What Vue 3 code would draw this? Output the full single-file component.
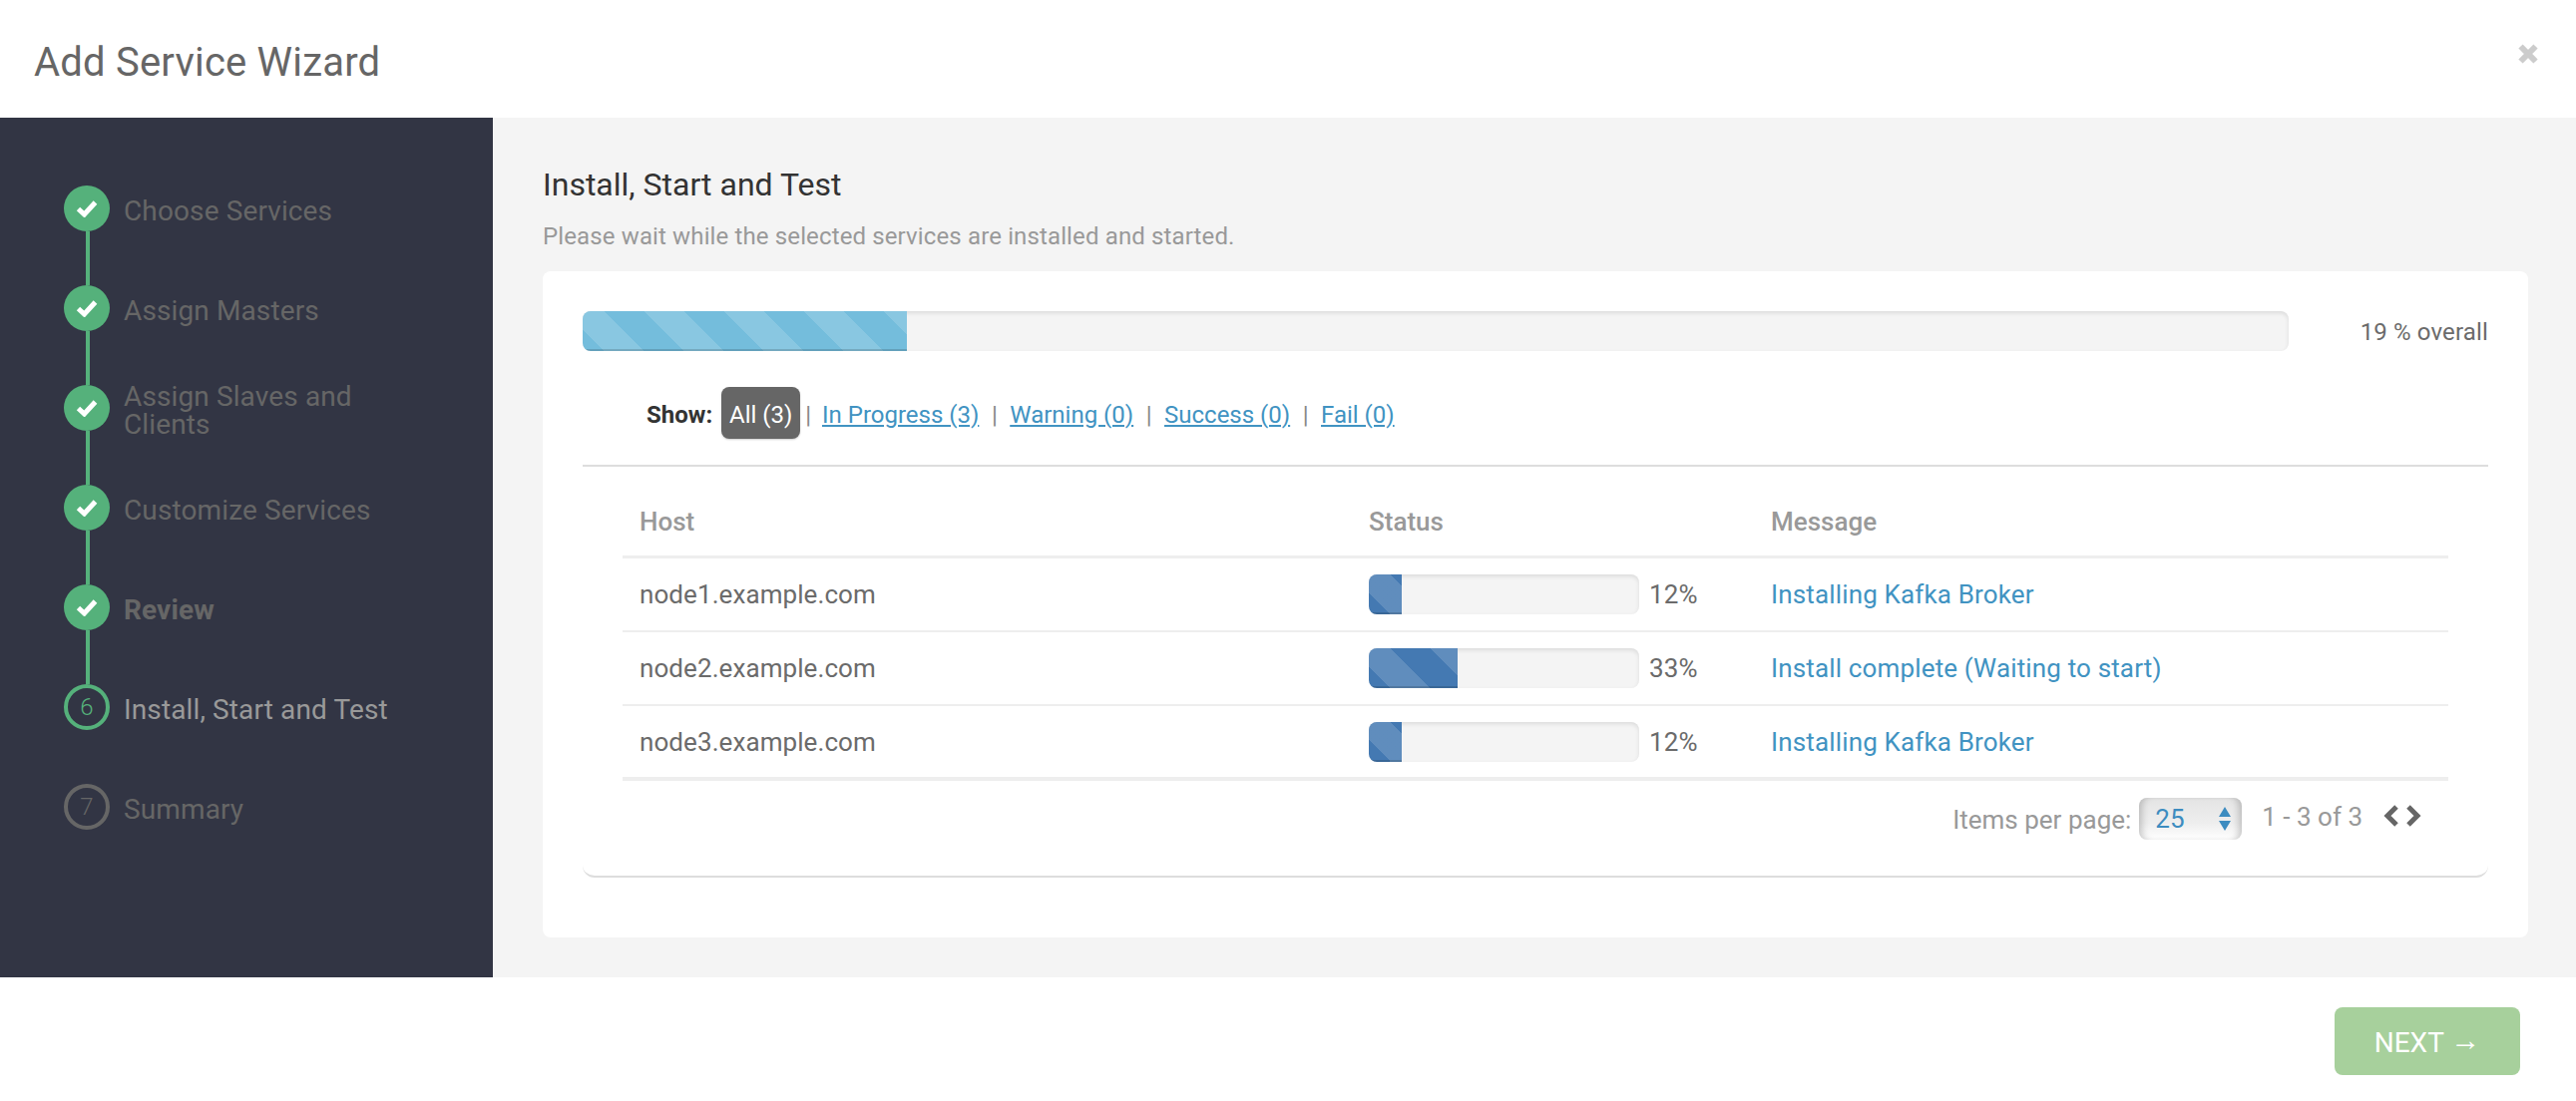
<template>
  <div class="wizard">
    <header class="wizard__header">
      <h1>Add Service Wizard</h1>
      <svg class="close" width="20" height="20" viewBox="0 0 20 20"><path d="M2.500 2.500l15 15M17.500 2.500l-15 15" stroke="#ccc" stroke-width="6" /></svg>
    </header>

    <div class="wizard__body">
      <aside class="steps">
        <div v-for="(step, i) in steps" :key="step.name" class="step" :class="step.state">
          <div class="dot">
            <svg v-if="step.state === 'done' || step.state === 'review'" width="22" height="18" viewBox="0 0 22 18">
              <path d="M2.500 9.500l6 5.500L19.500 3" fill="none" stroke="#fff" stroke-width="5" />
            </svg>
            <template v-else>{{ i + 1 }}</template>
          </div>
          <div class="step-name">{{ step.name }}</div>
        </div>
      </aside>

      <main class="content">
        <h2>Install, Start and Test</h2>
        <p class="lead">Please wait while the selected services are installed and started.</p>

        <section class="card">
          <div class="inner">
            <div class="overall">
              <div class="bar bar--overall">
                <div class="fill fill--info" style="width: 19%"></div>
              </div>
              <div class="overall-text">19 % overall</div>
            </div>

            <div class="filters">
              <b>Show:</b>
              <span class="pill">All (3)</span>
              <span class="sep first">|</span>
              <template v-for="(f, i) in filters" :key="f">
                <a href="#">{{ f }}</a>
                <span v-if="i < filters.length - 1" class="sep">|</span>
              </template>
            </div>

            <div class="table-wrap">
              <table>
                <colgroup>
                  <col style="width: 732px" />
                  <col style="width: 403px" />
                  <col />
                </colgroup>
                <thead>
                  <tr>
                    <th>Host</th>
                    <th>Status</th>
                    <th>Message</th>
                  </tr>
                </thead>
                <tbody>
                  <tr v-for="row in rows" :key="row.host">
                    <td>{{ row.host }}</td>
                    <td>
                      <div class="status">
                        <div class="bar bar--host">
                          <div class="fill fill--blue" :style="{ width: row.pct + '%' }"></div>
                        </div>
                        <span>{{ row.pct }}%</span>
                      </div>
                    </td>
                    <td><a class="msg" href="#">{{ row.message }}</a></td>
                  </tr>
                </tbody>
              </table>

              <div class="pager">
                <span class="per-page">Items per page:</span>
                <div class="select">
                  <span>25</span>
                  <svg width="12" height="24" viewBox="0 0 12 24">
                    <path d="M6 0l6 10H0zM6 24L0 14h12z" fill="#3d8cc0" />
                  </svg>
                </div>
                <span class="range">1 - 3 of 3</span>
                <svg class="chevrons" width="40" height="24" viewBox="0 0 40 24">
                  <path d="M14 3L5 12l9 9M26 3l9 9-9 9" fill="none" stroke="#666" stroke-width="5" />
                </svg>
              </div>
            </div>
          </div>
        </section>
      </main>
    </div>

    <footer class="wizard__footer">
      <button class="next">NEXT <span class="arrow">&rarr;</span></button>
    </footer>
  </div>
</template>

<script setup>
const steps = [
  { name: 'Choose Services', state: 'done' },
  { name: 'Assign Masters', state: 'done' },
  { name: 'Assign Slaves and Clients', state: 'done' },
  { name: 'Customize Services', state: 'done' },
  { name: 'Review', state: 'review' },
  { name: 'Install, Start and Test', state: 'active' },
  { name: 'Summary', state: 'todo' },
]

const filters = ['In Progress (3)', 'Warning (0)', 'Success (0)', 'Fail (0)']

const rows = [
  { host: 'node1.example.com', pct: 12, message: 'Installing Kafka Broker' },
  { host: 'node2.example.com', pct: 33, message: 'Install complete (Waiting to start)' },
  { host: 'node3.example.com', pct: 12, message: 'Installing Kafka Broker' },
]
</script>

<style>
html, body {
  margin: 0;
  background: #fff;
}
</style>

<style scoped>
.wizard {
  width: 2582px;
  height: 1104px;
  display: flex;
  flex-direction: column;
  font-family: Roboto, sans-serif;
  font-size: 26px;
  color: #666;
  overflow: hidden;
}

.wizard__header {
  height: 118px;
  flex: none;
  display: flex;
  align-items: center;
  justify-content: space-between;
  padding: 6px 38px 0 34px;
  box-sizing: border-box;
}

.wizard__header h1 {
  margin: 0;
  font-size: 40px;
  font-weight: 400;
  letter-spacing: 0.2px;
  color: #666;
}

.close {
  margin-bottom: 16px;
}

.wizard__body {
  height: 862px;
  flex: none;
  display: flex;
}

/* left steps */
.steps {
  width: 494px;
  flex: none;
  background: #323544;
  padding-top: 68px;
  box-sizing: border-box;
}

.step {
  position: relative;
  display: flex;
  align-items: center;
  height: 46px;
  margin: 0 0 54px 64px;
}

.step:not(:last-child)::after {
  content: '';
  position: absolute;
  left: 22px;
  top: 46px;
  width: 4px;
  height: 54px;
  background: #55b17b;
}

.step:nth-child(n + 6)::after {
  display: none;
}

.dot {
  width: 46px;
  height: 46px;
  flex: none;
  border-radius: 50%;
  display: flex;
  align-items: center;
  justify-content: center;
  box-sizing: border-box;
  font-size: 24px;
  font-weight: 300;
  background: #55b17b;
}

.step.active .dot {
  background: none;
  border: 4px solid #55b17b;
  color: #55b17b;
}

.step.todo .dot {
  background: none;
  border: 4px solid #666;
  color: #666;
}

.step-name {
  margin: 6px 0 0 14px;
  width: 270px;
  font-size: 28px;
  line-height: 28px;
  letter-spacing: 0.12px;
  color: #666;
}

.step.review .step-name {
  font-weight: 700;
}

.step.active .step-name {
  color: #999;
}

/* main area */
.content {
  flex: 1;
  background: #f4f4f4;
  padding: 48px 48px 40px 50px;
  box-sizing: border-box;
  display: flex;
  flex-direction: column;
}

.content h2 {
  margin: 0;
  font-size: 32px;
  line-height: 38px;
  font-weight: 400;
  color: #333;
}

.lead {
  margin: 16px 0 0;
  font-size: 24px;
  line-height: 34px;
  font-weight: 400;
  letter-spacing: 0.13px;
  color: #999;
}

.card {
  flex: 1;
  margin-top: 18px;
  background: #fff;
  border-radius: 8px;
  padding: 40px 40px 60px;
  box-sizing: border-box;
  display: flex;
}

.inner {
  flex: 1;
  border-bottom: 2px solid #ddd;
  border-radius: 0 0 12px 12px;
}

.overall {
  display: flex;
  align-items: center;
  justify-content: space-between;
}

.bar {
  background: #f4f4f4;
  border-radius: 8px;
  box-shadow: inset 0 2px 4px rgba(0, 0, 0, 0.1);
  overflow: hidden;
  height: 40px;
}

.bar--overall {
  width: 1710px;
}

.bar--host {
  width: 271px;
  flex: none;
}

.fill {
  height: 100%;
  box-shadow: inset 0 -2px 0 rgba(0, 0, 0, 0.15);
  background-size: 80px 80px;
  background-position: -18px 0;
  background-image: linear-gradient(45deg, rgba(255, 255, 255, 0.15) 25%, transparent 25%, transparent 50%, rgba(255, 255, 255, 0.15) 50%, rgba(255, 255, 255, 0.15) 75%, transparent 75%, transparent);
}

.fill--info {
  background-color: #74bddc;
}

.fill--blue {
  background-color: #4479b2;
}

.overall-text {
  margin-top: 2px;
  font-size: 24px;
  font-weight: 400;
  letter-spacing: 0.15px;
  color: #6b6b6b;
}

.filters {
  height: 114px;
  padding: 10px 0 0;
  box-sizing: border-box;
  margin-left: 64px;
  display: flex;
  align-items: center;
  font-size: 24px;
  color: #888;
}

.filters b,
.filters a,
.sep {
  padding-top: 3px;
}

.filters b {
  color: #333;
  font-weight: 700;
  margin-right: 8px;
}

.pill {
  width: 79px;
  height: 52px;
  margin: 0 3px 0 1px;
  padding-top: 3px;
  box-sizing: border-box;
  display: flex;
  align-items: center;
  justify-content: center;
  background: #666;
  color: #fff;
  border-radius: 8px;
  font-weight: 400;
  box-shadow: 0 1px 2px rgba(0, 0, 0, 0.2);
}

.sep {
  margin: 0 12.500px;
}

.sep.first {
  margin: 0 11px 0 2px;
}

.filters a {
  color: #4193c2;
  font-weight: 400;
}

.table-wrap {
  border-top: 2px solid #ddd;
  padding: 0 40px;
}

table {
  width: 100%;
  table-layout: fixed;
  border-collapse: separate;
  border-spacing: 0;
}

th {
  height: 92px;
  padding: 20px 16px 0;
  box-sizing: border-box;
  text-align: left;
  font-size: 26px;
  font-weight: 500;
  color: #999;
  border-bottom: 3px solid #eee;
}

td {
  height: 74px;
  padding: 0 16px;
  box-sizing: border-box;
  font-weight: 400;
  letter-spacing: 0.08px;
  color: #6b6b6b;
  border-bottom: 2px solid #eee;
}

tr:last-child td {
  height: 75px;
  border-bottom-width: 4px;
}

th:first-child,
td:first-child {
  padding-left: 17px;
}

.status {
  display: flex;
  align-items: center;
  gap: 10px;
}

.msg {
  color: #4193c2;
  text-decoration: none;
  font-weight: 400;
  letter-spacing: 0.15px;
}

.pager {
  margin-top: 16px;
  height: 44px;
  display: flex;
  align-items: center;
  justify-content: flex-end;
  padding-right: 26px;
  font-weight: 400;
  color: #999;
}

.per-page {
  margin: 2px 8px 0 0;
}

.select {
  width: 103px;
  height: 42px;
  padding: 0 11px 0 16px;
  box-sizing: border-box;
  display: flex;
  align-items: center;
  justify-content: space-between;
  color: #3d8cc0;
  border-radius: 8px;
  background: linear-gradient(#e4e4e4, #eee 60%, #fff);
  box-shadow: inset 7px 0 7px -4px rgba(0, 0, 0, 0.2), inset -7px 0 7px -4px rgba(0, 0, 0, 0.2);
}

.range {
  margin-left: 20px;
  margin-bottom: 4px;
}

.chevrons {
  margin: 0 0 6px 20px;
}

.wizard__footer {
  flex: 1;
  display: flex;
  justify-content: flex-end;
  align-items: flex-start;
  padding: 30px 56px 0 0;
}

.next {
  width: 186px;
  height: 68px;
  border: 0;
  border-radius: 8px;
  background: #a7d09c;
  color: #fff;
  font-family: Roboto, sans-serif;
  font-size: 28px;
  font-weight: 400;
}

.arrow {
  font-family: "Liberation Sans", sans-serif;
  font-size: 30px;
  vertical-align: 2px;
}
</style>
